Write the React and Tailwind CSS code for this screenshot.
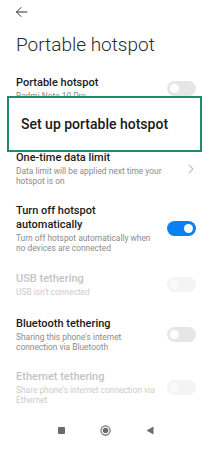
import React from 'react';

const Toggle = ({ on, disabled }) => {
    if (on) {
        return (
            <div className="w-[29px] h-[15px] rounded-full bg-[#0d7ff5] flex items-center justify-end pr-[3px] shrink-0">
                <div className="w-[9px] h-[9px] rounded-full bg-white" />
            </div>
        );
    }
    return (
        <div className={`w-[29px] h-[15px] rounded-full flex items-center pl-[3px] shrink-0 ${disabled ? 'bg-[#f4f4f4]' : 'bg-[#e6e6e6]'}`}>
            <div className={`w-[9px] h-[9px] rounded-full ${disabled ? 'bg-[#fafafa]' : 'bg-white'}`} />
        </div>
    );
};

const Chevron = () => (
    <svg width="6" height="10" viewBox="0 0 6 10" className="shrink-0 mr-[2px]">
        <path d="M1 1l4 4-4 4" fill="none" stroke="#c4c4c4" strokeWidth="1.1" strokeLinecap="round" strokeLinejoin="round" />
    </svg>
);

const Row = ({ title, sub, right, disabled }) => (
    <div className="flex items-center justify-between py-[9px] pl-4 pr-4 gap-2">
        <div className="flex-1 min-w-0">
            <div className={`text-[11px] leading-[14px] font-medium ${disabled ? 'text-[#c4c4c4]' : 'text-[#1a1a1a]'}`}>
                {title}
            </div>
            {sub && (
                <div className={`mt-px text-[8.4px] leading-[10px] ${disabled ? 'text-[#cccccc]' : 'text-[#8c8c8c]'}`}>
                    {sub}
                </div>
            )}
        </div>
        {right}
    </div>
);

export default function App() {
    return (
        <div
            className="relative w-[212px] h-[450px] bg-white overflow-hidden flex flex-col"
            style={{ fontFamily: 'Roboto, "Liberation Sans", sans-serif' }}
        >
            <div className="pt-[6px] pl-[15px] h-[34px]">
                <svg width="13" height="12" viewBox="0 0 13 12">
                    <path d="M12 6H1.5M6 1.5L1.5 6 6 10.5" fill="none" stroke="#333" strokeWidth="1" strokeLinecap="round" strokeLinejoin="round" />
                </svg>
            </div>
            <h1 className="pl-4 text-[19px] leading-[22px] font-light text-[#2a2a2a]">Portable hotspot</h1>
            <div className="h-[11px]" />

            <Row title="Portable hotspot" sub="Redmi Note 10 Pro" right={<Toggle />} />
            <div className="h-[32px]" />
            <Row
                title="One-time data limit"
                sub="Data limit will be applied next time your hotspot is on"
                right={<Chevron />}
            />
            <Row
                title="Turn off hotspot automatically"
                sub="Turn off hotspot automatically when no devices are connected"
                right={<Toggle on />}
            />
            <div className="h-px" />
            <Row title="USB tethering" sub="USB isn't connected" right={<Toggle disabled />} disabled />
            <div className="h-[2px]" />
            <Row
                title="Bluetooth tethering"
                sub="Sharing this phone's internet connection via Bluetooth"
                right={<Toggle />}
            />
            <Row
                title="Ethernet tethering"
                sub="Share phone's internet connection via Ethernet"
                right={<Toggle disabled />}
                disabled
            />

            <div className="mt-auto h-[26px] mb-[7px] flex items-center justify-center gap-[35px]">
                <div className="w-[7px] h-[7px] bg-[#6b6b6b] rounded-[1px]" />
                <svg width="11" height="11" viewBox="0 0 11 11">
                    <circle cx="5.5" cy="5.5" r="4.6" fill="none" stroke="#6b6b6b" strokeWidth="1.1" />
                    <circle cx="5.5" cy="5.5" r="2.8" fill="#6b6b6b" />
                </svg>
                <svg width="8" height="9" viewBox="0 0 8 9">
                    <path d="M7.5 0.5v8L0.5 4.5z" fill="#6b6b6b" />
                </svg>
            </div>

            <div className="absolute left-[7px] top-[96px] w-[195px] h-[56px] bg-white border-2 border-[#1f8b6e] flex items-center pl-[12px]">
                <span className="text-[14px] font-medium text-[#1a1a1a]">Set up portable hotspot</span>
            </div>
        </div>
    );
}
